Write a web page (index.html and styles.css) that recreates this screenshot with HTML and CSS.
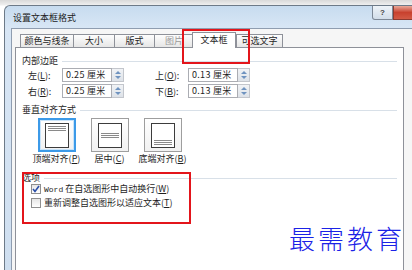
FILE: index.html
```html
<!DOCTYPE html>
<html lang="zh-CN">
<head>
    <meta charset="UTF-8">
    <title>设置文本框格式</title>
    <link rel="stylesheet" href="styles.css">
</head>
<body>

    <!-- Dialog window -->
    <div class="window">
        <div class="titlebar">
            <span class="title">设置文本框格式</span>
            <div class="help-btn">?</div>
            <div class="close-btn"></div>
        </div>

        <div class="client">
            <!-- Tabs -->
            <div class="tabs">
                <div class="tab w1">颜色与线条</div>
                <div class="tab w2">大小</div>
                <div class="tab w3">版式</div>
                <div class="tab w4 disabled">图片</div>
                <div class="tab w5 active">文本框</div>
                <div class="tab w6">可选文字</div>
            </div>

            <div class="panel">
                <div class="group-title">内部边距</div>
                <div class="margins">
                    <span class="lbl">左(<u>L</u>):</span>
                    <div class="field">0.25 厘米</div>
                    <div class="spin"><i class="up"></i><i class="down"></i></div>
                    <span class="lbl second">上(<u>O</u>):</span>
                    <div class="field">0.13 厘米</div>
                    <div class="spin"><i class="up"></i><i class="down"></i></div>

                    <span class="lbl">右(<u>R</u>):</span>
                    <div class="field">0.25 厘米</div>
                    <div class="spin"><i class="up"></i><i class="down"></i></div>
                    <span class="lbl second">下(<u>B</u>):</span>
                    <div class="field">0.13 厘米</div>
                    <div class="spin"><i class="up"></i><i class="down"></i></div>
                </div>

                <div class="group-title">垂直对齐方式</div>
                <div class="aligns">
                    <div class="align-col">
                        <div class="align-btn selected">
                            <svg width="24" height="25" viewBox="0 0 24 25">
                                <rect x="0.5" y="0.5" width="23" height="24" fill="#fff" stroke="#3c3c3c"/>
                                <path d="M3 3.5H21M3 5.5H21M3 7.5H21" stroke="#8a8a8a"/>
                            </svg>
                        </div>
                        <span>顶端对齐(<u>P</u>)</span>
                    </div>
                    <div class="align-col">
                        <div class="align-btn">
                            <svg width="24" height="25" viewBox="0 0 24 25">
                                <rect x="0.5" y="0.5" width="23" height="24" fill="#fff" stroke="#3c3c3c"/>
                                <path d="M3 10.5H21M3 12.5H21M3 14.5H21" stroke="#8a8a8a"/>
                            </svg>
                        </div>
                        <span>居中(<u>C</u>)</span>
                    </div>
                    <div class="align-col">
                        <div class="align-btn">
                            <svg width="24" height="25" viewBox="0 0 24 25">
                                <rect x="0.5" y="0.5" width="23" height="24" fill="#fff" stroke="#3c3c3c"/>
                                <path d="M3 17.5H21M3 19.5H21M3 21.5H21" stroke="#8a8a8a"/>
                            </svg>
                        </div>
                        <span>底端对齐(<u>B</u>)</span>
                    </div>
                </div>

                <div class="group-title">选项</div>
                <div class="options">
                    <label class="opt">
                        <span class="check checked">
                            <svg width="8" height="8" viewBox="0 0 8 8"><path d="M1 4L3 6.5L7 1" fill="none" stroke="#2b4fa8" stroke-width="1.6"/></svg>
                        </span>
                        <span><span class="mono">Word</span> 在自选图形中自动换行(<u>W</u>)</span>
                    </label>
                    <label class="opt">
                        <span class="check"></span>
                        <span>重新调整自选图形以适应文本(<u>T</u>)</span>
                    </label>
                </div>
            </div>
        </div>
    </div>

    <!-- Red highlight boxes -->
    <div class="mark mark-tab"></div>
    <div class="mark mark-options"></div>

    <!-- Watermark -->
    <div class="watermark">最需教育</div>

</body>
</html>
```

FILE: styles.css
```css
body {
    margin: 0;
    width: 412px;
    height: 270px;
    overflow: hidden;
    position: relative;
    font-family: "Noto Sans CJK SC", sans-serif;
    font-size: 9px;
    color: #1e1e1e;
    background: linear-gradient(#d9d9d9 0, #efefef 5px, #ffffff 6px);
}

/* Window frame */
.window {
    margin: 5px 0 0 4px;
    width: 408px;
    height: 265px;
    box-sizing: border-box;
    border: 1px solid #6d7a88;
    border-bottom: none;
    border-right: none;
    border-radius: 6px 0 0 0;
    background: linear-gradient(#c7dbef 0, #d8e6f5 22px, #cfdff0 100%);
    padding: 0 0 0 6px;
}

.titlebar {
    height: 22px;
    display: flex;
    align-items: flex-start;
    position: relative;
}

.title {
    margin: 6px 0 0 2px;
    line-height: 11px;
    color: #222;
}

.help-btn {
    position: absolute;
    left: 361px;
    top: 0;
    width: 21px;
    height: 14px;
    box-sizing: border-box;
    border: 1px solid #7d8896;
    border-top: none;
    border-radius: 0 0 0 3px;
    background: linear-gradient(#eef3f8, #d2dde9);
    font-size: 8px;
    line-height: 13px;
    text-align: center;
    color: #444;
    font-family: "Liberation Sans", sans-serif;
    font-weight: bold;
}

.close-btn {
    position: absolute;
    left: 382px;
    top: 0;
    width: 19px;
    height: 14px;
    box-sizing: border-box;
    border: 1px solid #8b3a30;
    border-top: none;
    border-right: none;
    background: linear-gradient(#e9a99a, #c8412e 50%, #d25a45);
}

/* Dialog body */
.client {
    height: 242px;
    box-sizing: border-box;
    border: 1px solid #8f9db0;
    border-bottom: none;
    border-right: none;
    background: #f6f6f6;
    padding: 3px 0 0 3px;
}

.tabs {
    display: flex;
    align-items: flex-end;
    height: 15px;
    padding-left: 5px;
}

.tab {
    height: 13px;
    box-sizing: border-box;
    border: 1px solid #8e9199;
    border-bottom: none;
    margin-right: -1px;
    background: linear-gradient(#fdfdfd, #e6e6e6);
    text-align: center;
    line-height: 12px;
}

.tab.disabled {
    color: #9a9a9a;
}

.tab.active {
    height: 16px;
    margin: 0 0 -1px -1px;
    background: #fff;
    position: relative;
    line-height: 14px;
}

.w1 { width: 54px; }
.w2 { width: 42px; }
.w3 { width: 41px; }
.w4 { width: 40px; }
.w5 { width: 44px; }
.w6 { width: 47px; }

.panel {
    width: 389px;
    height: 223px;
    box-sizing: border-box;
    border: 1px solid #8e9199;
    border-bottom: none;
    background: #fff;
    padding: 7px 6px 0 6px;
}

/* Group headings with a line after them */
.group-title {
    display: flex;
    align-items: center;
    gap: 4px;
    height: 12px;
    line-height: 12px;
}

.group-title::after {
    content: "";
    flex: 1;
    height: 1px;
    background: #d8e0e8;
}

/* Internal margins */
.margins {
    display: grid;
    grid-template-columns: 34px 50px 12px 64px 50px 12px;
    grid-auto-rows: 14px;
    row-gap: 2px;
    margin: 1px 0 0 6px;
    align-items: center;
}

.lbl.second {
    margin-left: 31px;
}

.field {
    height: 14px;
    box-sizing: border-box;
    border: 1px solid #abadb3;
    padding-left: 3px;
    line-height: 12px;
    letter-spacing: 0.3px;
}

.spin {
    height: 14px;
    box-sizing: border-box;
    border: 1px solid #c3c6cc;
    border-left: none;
    background: linear-gradient(#f1f3f6, #dde2e8);
    display: flex;
    flex-direction: column;
    align-items: center;
    justify-content: center;
    gap: 2px;
}

.spin i {
    width: 0;
    height: 0;
    border-left: 3px solid transparent;
    border-right: 3px solid transparent;
}

.spin .up {
    border-bottom: 3px solid #6f93c0;
}

.spin .down {
    border-top: 3px solid #6f93c0;
}

.margins + .group-title {
    margin-top: 6px;
}

/* Vertical alignment buttons */
.aligns {
    display: flex;
    padding-left: 8px;
    margin-top: 2px;
}

.align-col {
    width: 53px;
    display: flex;
    flex-direction: column;
    align-items: center;
}

.align-btn {
    width: 38px;
    height: 34px;
    box-sizing: border-box;
    border: 1px solid #9e9e9e;
    background: linear-gradient(#ffffff, #f1f1f1);
    display: flex;
    align-items: center;
    justify-content: center;
}

.align-btn.selected {
    border: 2px solid #3c9ae8;
    box-shadow: inset 0 0 0 1px #c7e3fa;
}

.align-col span {
    margin-top: 1px;
    line-height: 12px;
    white-space: nowrap;
}

.aligns + .group-title {
    margin-top: 7px;
}

/* Options */
.options {
    display: flex;
    flex-direction: column;
    gap: 4px;
    padding-left: 9px;
    margin-top: 0;
}

.opt {
    display: flex;
    align-items: center;
    gap: 3px;
    height: 10px;
    line-height: 10px;
}

.check {
    width: 10px;
    height: 10px;
    box-sizing: border-box;
    border: 1px solid #8f8f8f;
    background: linear-gradient(#e6e6e6, #ffffff);
    display: flex;
    align-items: center;
    justify-content: center;
}

.mono {
    font-family: "Liberation Mono", monospace;
    font-size: 8px;
}

/* Red highlight boxes */
.mark {
    position: absolute;
    border: 2px solid #e3151b;
    box-sizing: border-box;
}

.mark-tab {
    left: 182px;
    top: 29px;
    width: 68px;
    height: 35px;
}

.mark-options {
    left: 22px;
    top: 172px;
    width: 169px;
    height: 52px;
}

/* Watermark */
.watermark {
    position: absolute;
    left: 289px;
    top: 219px;
    font-size: 26px;
    letter-spacing: 3px;
    color: #1b22e6;
    font-weight: 300;
}
```
